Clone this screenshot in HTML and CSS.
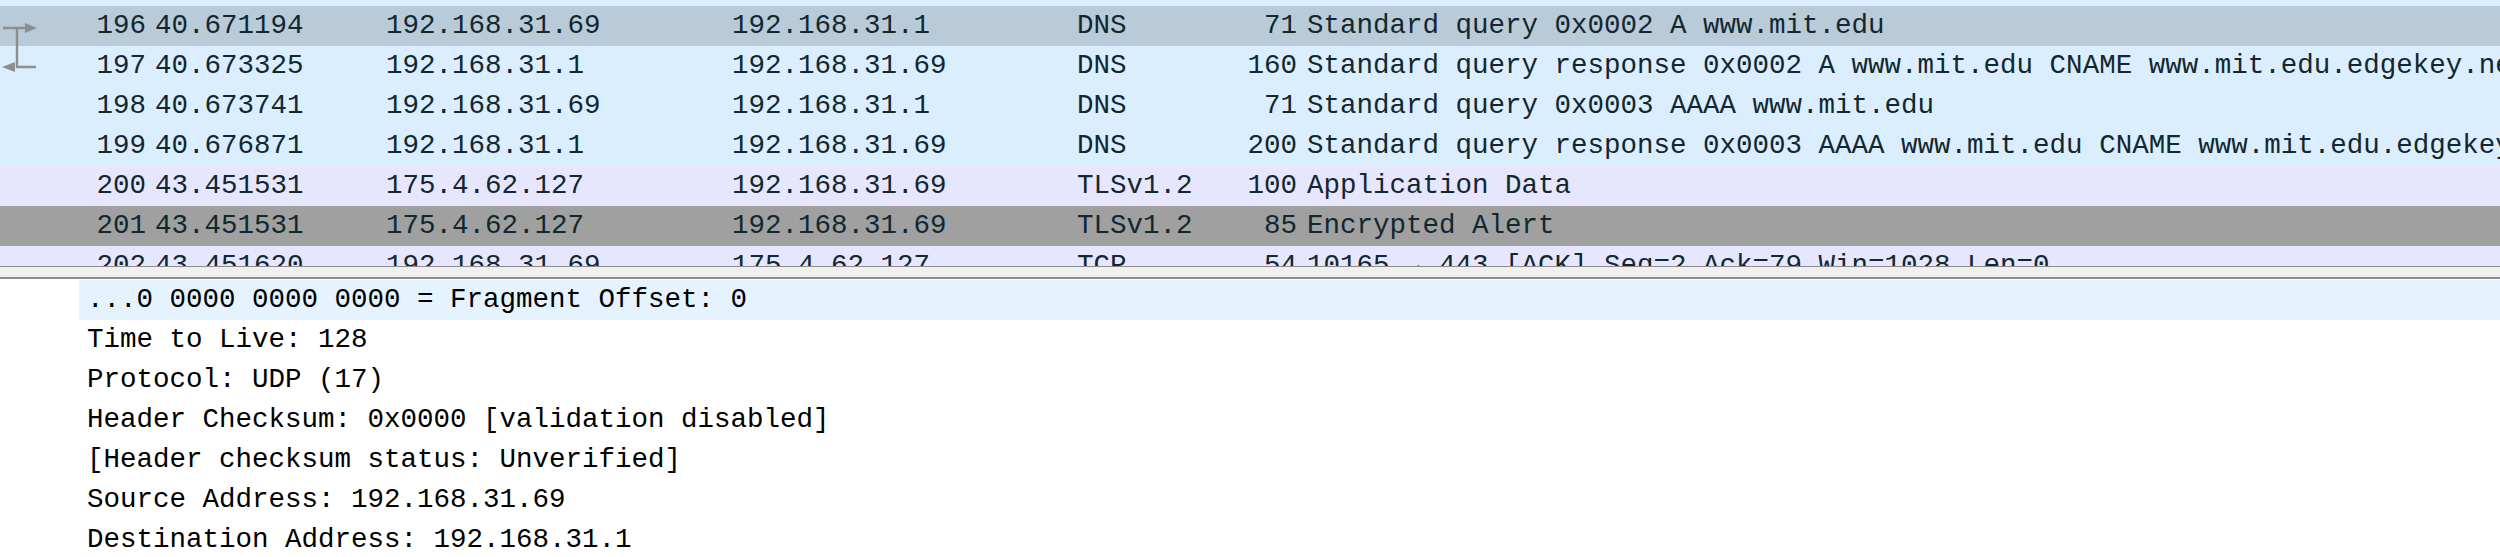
FILE: index.html
```html
<!DOCTYPE html>
<html>
<head>
<meta charset="utf-8">
<link rel="stylesheet" href="styles.css">
</head>
<body>
<div class="app">
  <div class="list">
    <svg class="related" width="40" height="80" viewBox="0 0 40 80">
      <path d="M3 22 H26 M17 22 V61 H36" stroke="#8e8e8e" stroke-width="2.4" fill="none"/>
      <polygon points="25,17 37,22 25,27" fill="#8e8e8e"/>
      <polygon points="15,56 2,61 15,66" fill="#8e8e8e"/>
    </svg>
    <div class="row udp partial"></div>
    <div class="row sel"><span class="c no">196</span><span class="c">40.671194</span><span class="c">192.168.31.69</span><span class="c">192.168.31.1</span><span class="c">DNS</span><span class="c len">71</span><span class="c info">Standard query 0x0002 A www.mit.edu</span></div>
    <div class="row udp"><span class="c no">197</span><span class="c">40.673325</span><span class="c">192.168.31.1</span><span class="c">192.168.31.69</span><span class="c">DNS</span><span class="c len">160</span><span class="c info">Standard query response 0x0002 A www.mit.edu CNAME www.mit.edu.edgekey.net CNAME e9566.dscb.akamaiedge.net</span></div>
    <div class="row udp"><span class="c no">198</span><span class="c">40.673741</span><span class="c">192.168.31.69</span><span class="c">192.168.31.1</span><span class="c">DNS</span><span class="c len">71</span><span class="c info">Standard query 0x0003 AAAA www.mit.edu</span></div>
    <div class="row udp"><span class="c no">199</span><span class="c">40.676871</span><span class="c">192.168.31.1</span><span class="c">192.168.31.69</span><span class="c">DNS</span><span class="c len">200</span><span class="c info">Standard query response 0x0003 AAAA www.mit.edu CNAME www.mit.edu.edgekey.net CNAME e9566.dscb.akamaiedge.net</span></div>
    <div class="row tcp"><span class="c no">200</span><span class="c">43.451531</span><span class="c">175.4.62.127</span><span class="c">192.168.31.69</span><span class="c">TLSv1.2</span><span class="c len">100</span><span class="c info">Application Data</span></div>
    <div class="row fin"><span class="c no">201</span><span class="c">43.451531</span><span class="c">175.4.62.127</span><span class="c">192.168.31.69</span><span class="c">TLSv1.2</span><span class="c len">85</span><span class="c info">Encrypted Alert</span></div>
    <div class="row tcp"><span class="c no">202</span><span class="c">43.451620</span><span class="c">192.168.31.69</span><span class="c">175.4.62.127</span><span class="c">TCP</span><span class="c len">54</span><span class="c info">10165 → 443 [ACK] Seq=2 Ack=79 Win=1028 Len=0</span></div>
  </div>
  <div class="splitter"></div>
  <div class="details">
    <div class="drow hl">...0 0000 0000 0000 = Fragment Offset: 0</div>
    <div class="drow">Time to Live: 128</div>
    <div class="drow">Protocol: UDP (17)</div>
    <div class="drow">Header Checksum: 0x0000 [validation disabled]</div>
    <div class="drow">[Header checksum status: Unverified]</div>
    <div class="drow">Source Address: 192.168.31.69</div>
    <div class="drow">Destination Address: 192.168.31.1</div>
  </div>
</div>
</body>
</html>
```
FILE: styles.css
```css
html, body {
  margin: 0;
  padding: 0;
  background: #ffffff;
}
body {
  width: 2500px;
  height: 557px;
  overflow: hidden;
  font-family: "Liberation Mono", "DejaVu Sans Mono", monospace;
  font-size: 27.5px;
  color: #12272e;
}
.app {
  display: flex;
  flex-direction: column;
  height: 557px;
}
.list {
  position: relative;
  height: 266px;
  overflow: hidden;
  flex: none;
}
.related {
  position: absolute;
  left: 0;
  top: 6px;
  z-index: 2;
}
.row {
  display: grid;
  grid-template-columns: 155px 231px 346px 345px 123px 107px 1fr;
  height: 40px;
  line-height: 40px;
  white-space: nowrap;
  overflow: hidden;
}
.row.partial { height: 6px; }
.c { overflow: hidden; }
.c.no { text-align: right; padding-right: 9px; }
.c.len { text-align: right; padding-right: 10px; }
.c.info { overflow: visible; }
.udp { background: #daeeff; }
.sel { background: #b9cbd9; }
.tcp { background: #e7e6ff; }
.fin { background: #a0a0a0; }
.splitter {
  flex: none;
  height: 10px;
  background: #f0f0f0;
  border-top: 1px solid #8c8c8c;
  border-bottom: 2px solid #8c8c8c;
}
.details {
  flex: 1;
  padding-top: 1px;
  color: #000000;
}
.drow {
  height: 40px;
  line-height: 40px;
  margin-left: 79px;
  padding-left: 8px;
  white-space: nowrap;
}
.drow.hl { background: #e5f3ff; }
```
